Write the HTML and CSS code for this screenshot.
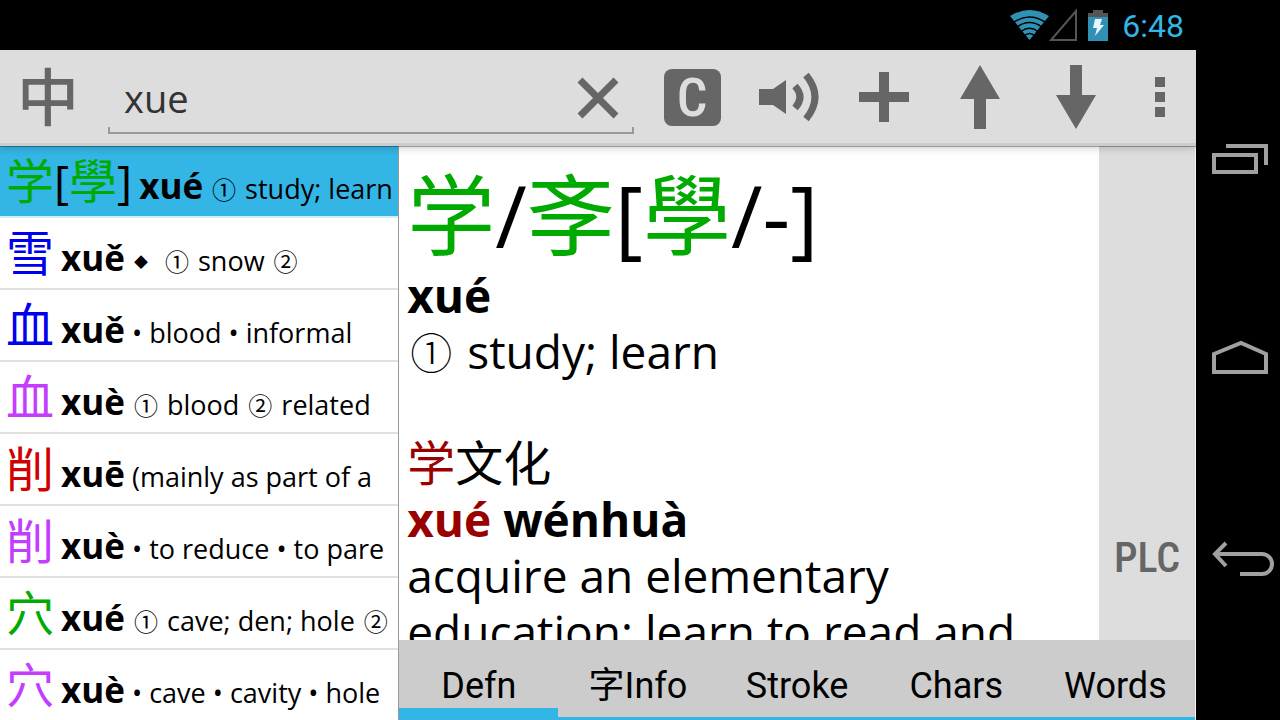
FILE: index.html
```html
<!DOCTYPE html>
<html lang="en">

<head>
    <meta charset="UTF-8">
    <meta name="viewport" content="width=device-width, initial-scale=1.0">
    <title>Dictionary</title>
    <link rel="stylesheet" href="styles.css">
</head>
<body>
    <div class="app">
        <header class="statusbar">
            <svg class="wifi" width="40" height="32" viewBox="0 0 40 32">
                <path class="wifi-fan" d="M0 7 Q19.500 -5 39 7 L19.500 31 Z"/>
                <path class="wifi-gap" d="M4 13 Q19.500 3 35 13 M7 18 Q19.500 9 32 18 M11 22.500 Q19.500 16 28 22.500 M14 27 Q19.500 22 25 27"/>
            </svg>
            <svg width="28" height="32" viewBox="0 0 28 32">
                <path class="signal" d="M1 31 L26 31 L26 2 Z"/>
            </svg>
            <svg class="battery" width="20" height="32" viewBox="0 0 20 32">
                <path class="battery-top" d="M5 1h10v3h5v5H0V4h5z"/>
                <path class="battery-fill" d="M0 8h20v24H0z"/>
                <path class="bolt" d="M7 10h7l-2 6h4L7 27l2-8H5z"/>
            </svg>
            <span class="clock">6:48</span>
        </header>

        <div class="toolbar">
            <button class="tool lang" type="button">中</button>
            <div class="search">
                <input class="search-input" type="text" value="xue" aria-label="Search">
                <button class="clear" type="button" aria-label="Clear">
                    <svg width="40" height="40" viewBox="0 0 40 40"><path class="cross" d="M2 2l36 36M38 2L2 38"/></svg>
                </button>
            </div>
            <button class="tool" type="button"><span class="badge">C</span></button>
            <button class="tool" type="button" aria-label="Play sound">
                <svg width="58" height="50" viewBox="0 0 58 50">
                    <path class="fill" d="M0 17h14L27 8v34L14 33H0z"/>
                    <path class="wave" d="M36 14 Q46 25 36 36"/>
                    <path class="wave" d="M47 3 Q65 25 47 47"/>
                </svg>
            </button>
            <button class="tool" type="button" aria-label="Add">
                <svg width="50" height="50" viewBox="0 0 50 50"><path class="fill" d="M20 0h10v20h20v10H30v20H20V30H0V20h20z"/></svg>
            </button>
            <button class="tool" type="button" aria-label="Previous">
                <svg width="40" height="64" viewBox="0 0 40 64"><path class="fill" d="M20 0l20 34H26v30H14V34H0z"/></svg>
            </button>
            <button class="tool" type="button" aria-label="Next">
                <svg width="40" height="64" viewBox="0 0 40 64"><path class="fill" d="M14 0h12v30h14L20 64 0 30h14z"/></svg>
            </button>
            <button class="tool more" type="button" aria-label="More">
                <svg width="10" height="40" viewBox="0 0 10 40"><path class="fill" d="M0 0h10v10H0zM0 15h10v10H0zM0 30h10v10H0z"/></svg>
            </button>
        </div>

        <div class="content">
            <ul class="results">
                <li class="result selected"><span class="hanzi green">学</span><span class="bracket">[</span><span class="hanzi green">學</span><span class="bracket">]</span> <b>xué</b> <span class="num">①</span> study; learn</li>
                <li class="result"><span class="hanzi blue">雪</span> <b>xuě</b> <span class="diamond">◆</span> <span class="num">①</span> snow <span class="num">②</span></li>
                <li class="result"><span class="hanzi blue">血</span> <b>xuě</b> • blood • informal</li>
                <li class="result"><span class="hanzi purple">血</span> <b>xuè</b> <span class="num">①</span> blood <span class="num">②</span> related</li>
                <li class="result"><span class="hanzi red">削</span> <b>xuē</b> (mainly as part of a</li>
                <li class="result"><span class="hanzi purple">削</span> <b>xuè</b> • to reduce • to pare</li>
                <li class="result"><span class="hanzi green">穴</span> <b>xué</b> <span class="num">①</span> cave; den; hole <span class="num">②</span></li>
                <li class="result"><span class="hanzi purple">穴</span> <b>xuè</b> • cave • cavity • hole</li>
            </ul>

            <div class="detail">
                <div class="detail-row">
                    <div class="entry">
                        <h1 class="headword"><span class="hanzi green">学</span>/<span class="hanzi green">斈</span>[<span class="hanzi green">學</span>/-]</h1>
                        <p><b>xué</b></p>
                        <p><span class="num">①</span> study; learn</p>
                        <p class="example"><span class="hanzi"><span class="match">学</span>文化</span></p>
                        <p><b><span class="match">xué</span> wénhuà</b></p>
                        <p>acquire an elementary education; learn to read and</p>
                    </div>
                    <aside class="side">
                        <button class="dict" type="button">PLC</button>
                    </aside>
                </div>
                <nav class="tabs">
                    <button class="tab active" type="button">Defn</button>
                    <button class="tab" type="button">字Info</button>
                    <button class="tab" type="button">Stroke</button>
                    <button class="tab" type="button">Chars</button>
                    <button class="tab" type="button">Words</button>
                </nav>
            </div>
        </div>
    </div>

    <nav class="navbar">
        <button class="nav-btn" type="button" aria-label="Recent apps">
            <svg width="58" height="32" viewBox="0 0 58 32"><path d="M2 11h42v17H2zM14 2h40v19"/></svg>
        </button>
        <button class="nav-btn" type="button" aria-label="Home">
            <svg width="58" height="36" viewBox="0 0 58 36"><path d="M2 30V12L29 1l25 11v18z"/></svg>
        </button>
        <button class="nav-btn" type="button" aria-label="Back">
            <svg width="64" height="36" viewBox="0 0 64 36"><path d="M14 1L3 12l11 12M3 12h47a10 10 0 0 1 0 20H28"/></svg>
        </button>
    </nav>
</body>

</html>
```
FILE: styles.css
```css
* {
    box-sizing: border-box;
}

body {
    margin: 0;
    display: flex;
    height: 100vh;
    overflow: hidden;
    background: #000;
    color: #000;
    font-family: "Open Sans", "Noto Sans CJK SC", sans-serif;
}

button {
    border: none;
    padding: 0;
    margin: 0;
    background: none;
    color: inherit;
    font-family: inherit;
    cursor: pointer;
}

svg {
    display: block;
    overflow: visible;
}

.app {
    flex: 1;
    min-width: 0;
    display: flex;
    flex-direction: column;
}

/* status bar */
.statusbar {
    height: 50px;
    padding-right: 12px;
    display: flex;
    align-items: center;
    justify-content: flex-end;
    color: #33b5e5;
    font: 32px Roboto, sans-serif;
}
.clock {
    padding-top: 2px;
}
.wifi-fan,
.battery-fill {
    fill: #3191b5;
}
.wifi-gap {
    fill: none;
    stroke: #000;
    stroke-width: 1.5;
}
.signal {
    fill: none;
    stroke: #555;
    stroke-width: 2;
}
.battery {
    margin: 0 14px 0 10px;
}
.battery-top {
    fill: #555;
}
.bolt {
    fill: #e6f6fc;
}

/* toolbar */
.toolbar {
    position: relative;
    z-index: 2;
    height: 96px;
    padding-bottom: 2px;
    flex: none;
    display: flex;
    background: #ddd;
    box-shadow: inset 0 -3px 0 #ccc, 0 1px 0 rgba(0, 0, 0, 0.3), 0 2px 8px rgba(0, 0, 0, 0.2);
    color: #666;
}
.tool {
    width: 96px;
    display: flex;
    align-items: center;
    justify-content: center;
}
.tool.more {
    width: 72px;
}
.lang {
    padding-bottom: 6px;
    font: 500 62px/80px "Noto Sans CJK SC", sans-serif;
}
.fill {
    fill: #666;
}
.wave,
.cross {
    fill: none;
    stroke: #666;
    stroke-width: 7;
}
.badge {
    width: 57px;
    height: 57px;
    border-radius: 8px;
    background: #666;
    color: #ddd;
    font: 500 54px/57px "Roboto Condensed", Roboto, sans-serif;
}
.search {
    flex: 1;
    min-width: 0;
    margin: 12px 10px 10px 12px;
    display: flex;
    align-items: center;
    /* underline with short ticks at both ends */
    background:
        linear-gradient(#999, #999) left bottom / 2px 7px no-repeat,
        linear-gradient(#999, #999) right bottom / 2px 7px no-repeat,
        linear-gradient(#999, #999) left bottom / 100% 2px no-repeat;
}
.search-input {
    flex: 1;
    min-width: 0;
    height: 100%;
    border: none;
    outline: none;
    padding: 0 16px;
    background: transparent;
    color: #333;
    font: 38px "Open Sans", sans-serif;
}
.clear {
    width: 72px;
    display: flex;
    justify-content: center;
}

/* result list */
.content {
    flex: 1;
    min-height: 0;
    display: flex;
    background: #fff;
}
.results {
    width: 33.3%;
    flex: none;
    margin: 0;
    padding: 0;
    list-style: none;
    overflow: hidden;
}
.result {
    height: 72px;
    padding: 8px 6px 0;
    border-bottom: 2px solid #e0e0e0;
    font-size: 27px;
    line-height: 54px;
    white-space: nowrap;
    overflow: hidden;
}
.result.selected {
    background: #33b5e5;
    border-bottom-color: #cdf0f5;
}
.result b {
    font-size: 35px;
    line-height: 1;
}
.result .hanzi {
    font-size: 48px;
}
.bracket {
    font-size: 46px;
    line-height: 1;
}
.hanzi {
    font-family: "Noto Sans CJK SC", sans-serif;
    line-height: 1;
}
.num {
    margin: 0 2px;
    font-family: "Noto Sans CJK SC", sans-serif;
    font-size: 24px;
    line-height: 1;
}
.diamond {
    margin: 0 8px 0 2px;
    font-family: "Noto Sans CJK SC", sans-serif;
    font-size: 14px;
    line-height: 1;
    vertical-align: 4px;
}
.green {
    color: #0a0;
}
.blue {
    color: #00e;
}
.purple {
    color: #c33cff;
}
.red {
    color: #d00000;
}

/* entry */
.detail {
    flex: 1;
    min-width: 0;
    display: flex;
    flex-direction: column;
    border-left: 1px solid #999;
    border-right: 1px solid #f4f4f4;
}
.detail-row {
    flex: 1;
    min-height: 0;
    display: flex;
}
.entry {
    flex: 1;
    min-width: 0;
    padding: 17px 8px 0;
    overflow: hidden;
    font-size: 46px;
    line-height: 56px;
}
.entry p {
    margin: 0;
}
.entry .hanzi {
    font-size: 48px;
}
.entry .num {
    margin: 0 3px;
    font-size: 42px;
    font-weight: 300;
}
.entry .headword {
    margin: 0;
    font-size: 86px;
    font-weight: normal;
    line-height: 104px;
}
.entry .headword .hanzi {
    font-size: 88px;
}
.entry .example {
    margin-top: 56px;
}
.match {
    color: #900;
}
.side {
    width: 96px;
    background: #ddd;
    display: flex;
    flex-direction: column;
    justify-content: flex-end;
    padding-bottom: 48px;
}
.dict {
    height: 70px;
    color: #666;
    font: 500 42px "Roboto Condensed", Roboto, sans-serif;
}

/* tabs */
.tabs {
    height: 80px;
    flex: none;
    display: flex;
    background: #ccc;
}
.tab {
    flex: 1;
    padding-top: 14px;
    border-bottom: 3px solid #33b5e5;
    font: 36px/44px Roboto, "Noto Sans CJK SC", sans-serif;
}
.tab.active {
    padding-top: 23px;
    border-bottom-width: 12px;
}

/* system buttons */
.navbar {
    width: 84px;
    flex: none;
    display: flex;
    flex-direction: column;
    padding: 60px 0;
}
.nav-btn {
    flex: 1;
    display: flex;
    align-items: center;
    padding-left: 16px;
}
.nav-btn svg {
    fill: none;
    stroke: #a0a0a0;
    stroke-width: 4;
}
```
